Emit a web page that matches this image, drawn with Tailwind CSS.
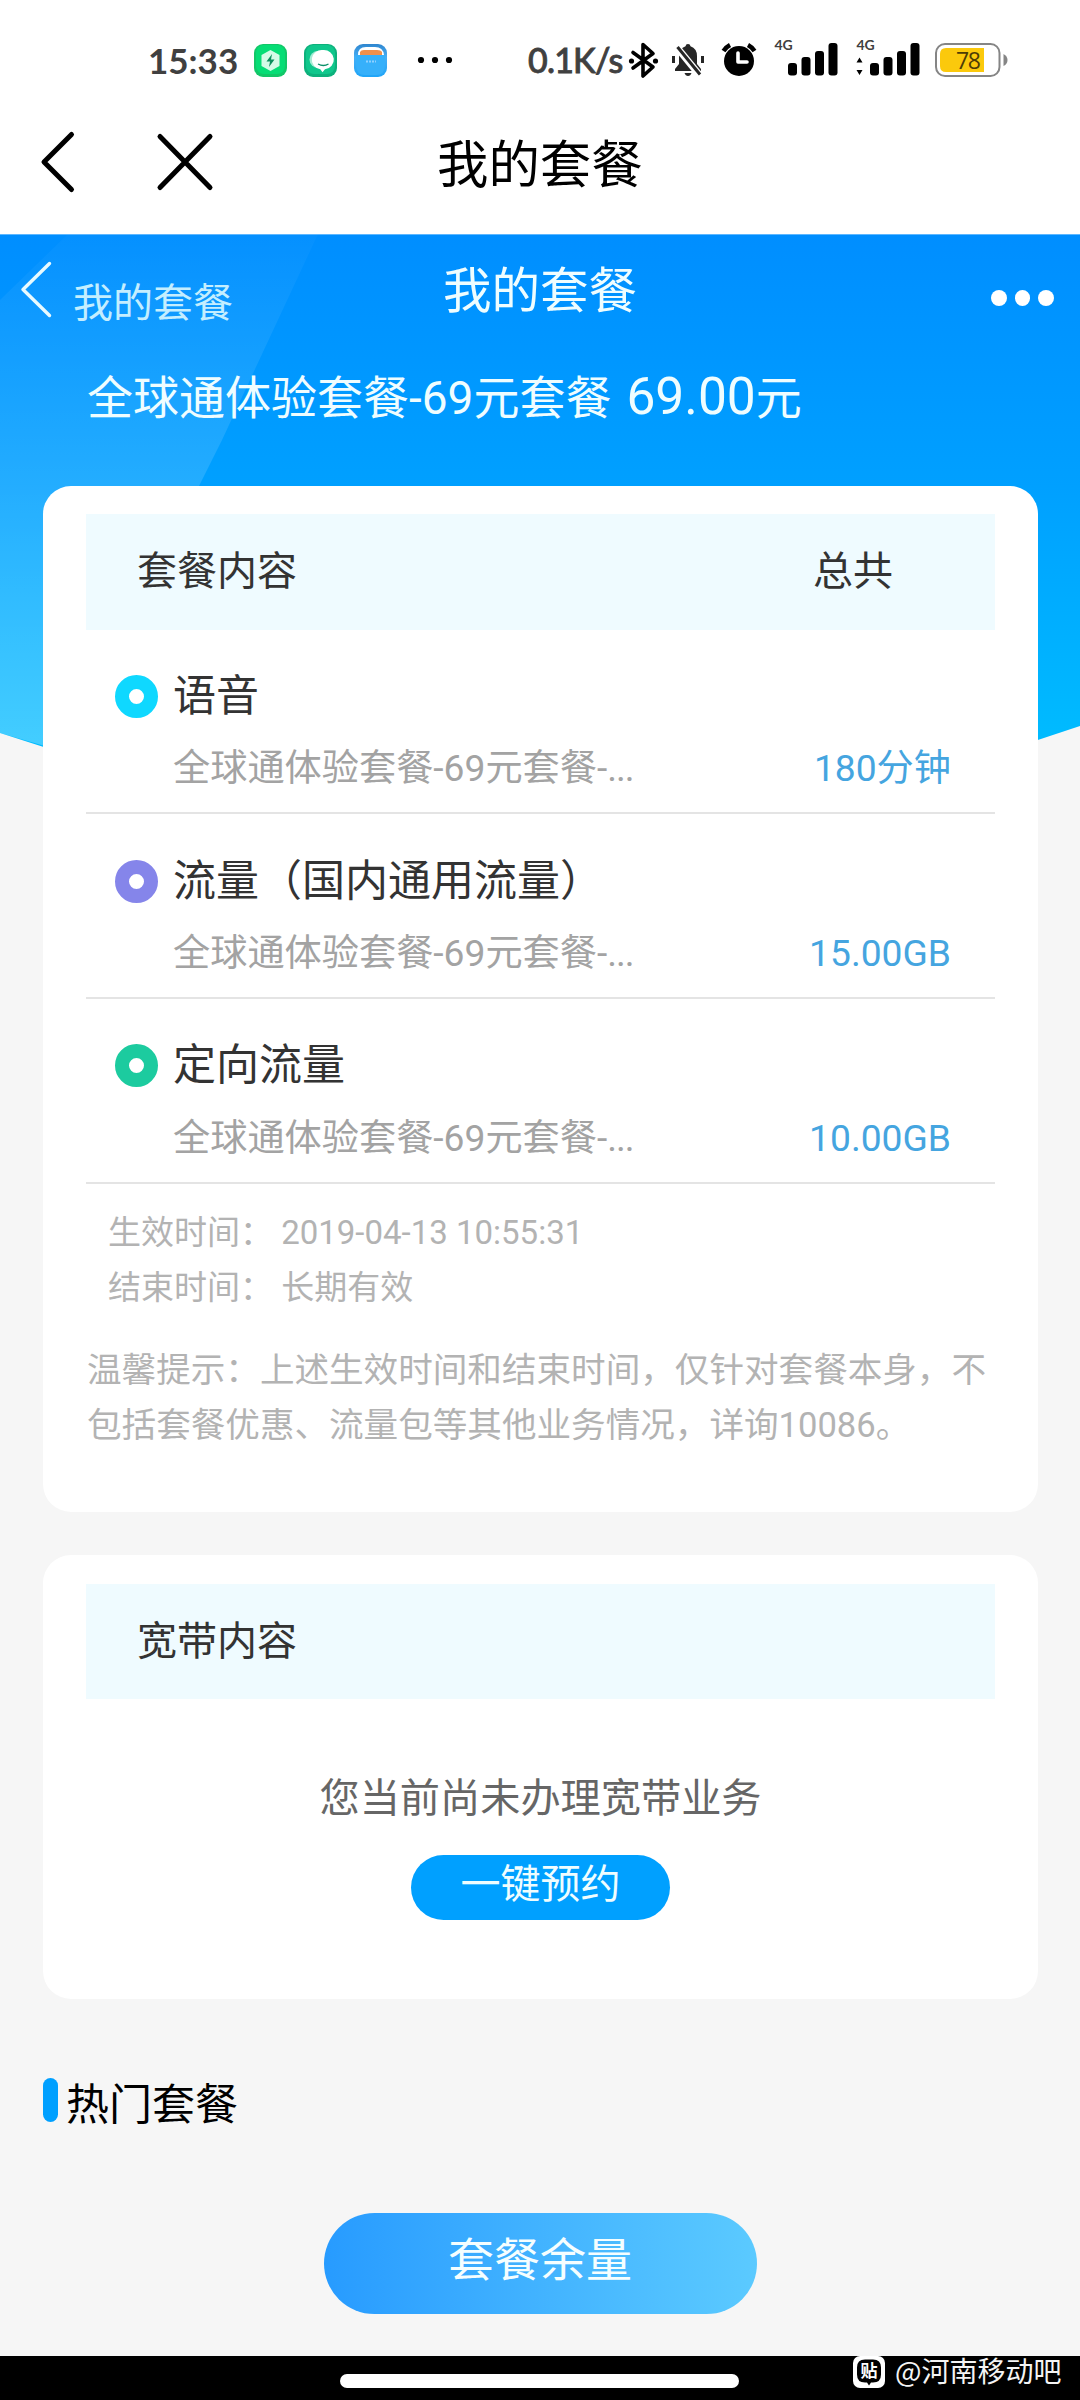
<!DOCTYPE html>
<html lang="zh-CN">
<head>
<meta charset="utf-8">
<title>我的套餐</title>
<script src="https://cdn.jsdelivr.net/npm/@tailwindcss/browser@4"></script>
</head>
<body class="w-[1080px] h-[2400px] overflow-hidden bg-[#f6f6f6] font-[Roboto,'Noto_Sans_CJK_SC',sans-serif] text-[#333]">
<div class="w-[1080px] h-[2400px] flex flex-col">

  <!-- status bar -->
  <div class="h-[117px] shrink-0 bg-white flex items-start pt-[40px]">
    <div class="w-[105px] pl-[148px] box-content h-10 leading-10 text-[35px] font-bold text-[#404040] font-[Lato,sans-serif] whitespace-nowrap">15:33</div>
    <svg class="w-[206px] h-10 shrink-0" viewBox="253 40 206 40">
      <defs>
        <linearGradient id="wal" x1="0" y1="0" x2="0" y2="1"><stop offset="0" stop-color="#2f86cf"/><stop offset=".4" stop-color="#46aef5"/><stop offset="1" stop-color="#1fa5f8"/></linearGradient>
      </defs>
      <rect x="254" y="44" width="33" height="33" rx="9" fill="#12c768"/>
      <rect x="256" y="45" width="29" height="29" rx="8" fill="#06dd75"/>
      <path d="M270.500 50l9 5v11l-9 5-9-5V55z" fill="#d5fbe7"/>
      <path d="M272 54l-5.500 7.500h3.500l-1 5.500 5.500-7.500h-3.500z" fill="#0b8f5c"/>
      <rect x="304" y="44" width="33" height="33" rx="9" fill="#0db17c"/>
      <rect x="306" y="45" width="29" height="29" rx="8" fill="#10c78c"/>
      <circle cx="318" cy="59.500" r="8.500" fill="#a5ecd4"/>
      <path d="M323 50a10 9.700 0 0 1 2 19.300l-2.500 3-2.200-3A9.800 9.700 0 0 1 323 50z" fill="#fff"/>
      <path d="M318 64q5.500 3 10.500 0" fill="none" stroke="#0b8f68" stroke-width="1.300"/>
      <rect x="354" y="44" width="33" height="33" rx="9" fill="url(#wal)"/>
      <path d="M358 55q0-8 8-8h9q8 0 9 8z" fill="#fff"/>
      <path d="M360 52q1-2 4-2h13q4 0 5 2v3h-22z" fill="#f0904c"/>
      <path d="M356 55h29v10q0 10-9 10h-11q-9 0-9-10z" fill="#36b0fa"/>
      <path d="M366 61.500h10" stroke="#8fd0ff" stroke-width="2" stroke-dasharray="2 1"/>
      <g fill="#000"><circle cx="421" cy="60" r="3.100"/><circle cx="435" cy="60" r="3.100"/><circle cx="449" cy="60" r="3.100"/></g>
    </svg>
    <div class="w-[98px] pl-[69px] box-content h-10 leading-10 text-[34px] font-[Lato,sans-serif] font-medium text-[#404040] whitespace-nowrap tracking-[-0.8px] [-webkit-text-stroke:0.8px_#404040]">0.1K/s</div>
    <svg class="w-[390px] h-10 shrink-0 overflow-visible" viewBox="626 40 390 40">
      <path d="M633 52.500l20 14.500-10 9V44.500l10 9-20 14.500" fill="none" stroke="#000" stroke-width="3.600" stroke-linejoin="round" stroke-linecap="round"/>
      <circle cx="631.500" cy="61" r="2.600"/><circle cx="655.500" cy="61" r="2.600"/>
      <g fill="#262626">
        <path d="M688 44a2.500 2.500 0 0 1 2.500 2.200Q697 48.500 697 56v8l4 5v2h-26v-2l4-5v-8q0-7.500 6.500-9.800A2.500 2.500 0 0 1 688 44z"/>
        <path d="M684.500 73h7q-1 3-3.500 3t-3.500-3z"/>
        <rect x="672" y="56" width="3" height="7"/><rect x="701" y="56" width="3" height="7"/>
      </g>
      <path d="M677 47.500L699.500 75" stroke="#fff" stroke-width="7"/>
      <path d="M677.500 47L700 74.500" stroke="#262626" stroke-width="3"/>
      <circle cx="739" cy="61" r="15"/>
      <path d="M723.500 51a17 17 0 0 1 6.500-6" fill="none" stroke="#000" stroke-width="4.500"/>
      <path d="M754.500 51a17 17 0 0 0-6.500-6" fill="none" stroke="#000" stroke-width="4.500"/>
      <path d="M738 53v9h9" fill="none" stroke="#fff" stroke-width="3.600" stroke-linecap="round" stroke-linejoin="round"/>
      <g font-family="Lato,sans-serif" font-size="14" font-weight="700" fill="#404040"><text x="774.500" y="50">4G</text><text x="856.500" y="50">4G</text></g>
      <rect x="788" y="63" width="9" height="12.500" rx="3"/><rect x="801.500" y="57" width="9" height="18.500" rx="3"/><rect x="815" y="51" width="9" height="24.500" rx="3"/><rect x="828.500" y="43" width="9" height="32.500" rx="3"/>
      <rect x="870" y="63" width="9" height="12.500" rx="3"/><rect x="883.500" y="57" width="9" height="18.500" rx="3"/><rect x="897" y="51" width="9" height="24.500" rx="3"/><rect x="910.500" y="43" width="9" height="32.500" rx="3"/>
      <path d="M859.500 57.500l3 5h-6zM859.500 75l3-5h-6z"/>
      <rect x="936" y="44" width="63.500" height="32" rx="9" fill="#fff" stroke="#858585" stroke-width="2"/>
      <path d="M946 48h38v24h-38q-6 0-6-6V54q0-6 6-6z" fill="#fbc90c"/>
      <path d="M1003.500 54q4 2 4 6t-4 6z" fill="#858585"/>
      <text x="956" y="69" font-family="'Open Sans',sans-serif" font-size="23" font-weight="500" fill="#4d3c06" textLength="25">78</text>
    </svg>
  </div>

  <!-- app bar -->
  <div class="h-[117px] shrink-0 bg-white flex items-start">
    <svg class="w-[438px] h-[100px] shrink-0" viewBox="0 117 438 100" fill="none" stroke="#000" stroke-width="5" stroke-linecap="round" stroke-linejoin="round">
      <path d="M71.500 134.500L44 162l27.500 27.500"/>
      <path d="M160 136.500l50 51M210 136.500l-50 51"/>
    </svg>
    <h1 class="h-[60px] -ml-px mt-[19px] leading-[60px] text-[51.400px] text-black">我的套餐</h1>
  </div>

  <!-- page body -->
  <div class="relative h-[2122px] shrink-0 flex flex-col">
    <svg class="absolute left-0 top-0 w-[1080px] h-[560px]" viewBox="0 234 1080 560">
      <defs>
        <linearGradient id="sky" gradientUnits="userSpaceOnUse" x1="0" y1="234" x2="0" y2="740"><stop offset="0" stop-color="#008eff"/><stop offset=".5" stop-color="#00a0ff"/><stop offset="1" stop-color="#00bbff"/></linearGradient>
        <linearGradient id="facet" gradientUnits="userSpaceOnUse" x1="0" y1="234" x2="0" y2="740"><stop offset="0" stop-color="#fff" stop-opacity=".02"/><stop offset=".25" stop-color="#fff" stop-opacity=".08"/><stop offset="1" stop-color="#fff" stop-opacity=".26"/></linearGradient>
      </defs>
      <path d="M0 234H1080V726L540 906 0 733z" fill="url(#sky)"/>
      <path d="M68 234H318L222 440 197 490V790L0 733V300z" fill="url(#facet)"/>
      <path d="M0 234H1080" stroke="#7cc4ff" stroke-width="1.500"/>
    </svg>

    <div class="relative h-[88px] flex">
      <svg class="w-[73px] h-[88px] shrink-0" viewBox="0 234 73 88" fill="none" stroke="#e8faff" stroke-width="3.400" stroke-linecap="round" stroke-linejoin="round"><path d="M49.500 263.500L23 289.500l26.500 26"/></svg>
      <div class="w-[370px] h-[50px] mt-[45px] leading-[50px] text-[40px] text-[#c4eeff]">我的套餐</div>
      <div class="w-[548px] h-[60px] mt-[28px] leading-[60px] text-[48.500px] text-[#effdff]">我的套餐</div>
      <div class="flex gap-2 mt-[56px]"><i class="size-[15.500px] rounded-full bg-white"></i><i class="size-[15.500px] rounded-full bg-white"></i><i class="size-[15.500px] rounded-full bg-white"></i></div>
    </div>

    <div class="relative h-[164px] pl-[87px] pt-[45px] leading-[60px] text-[46px] text-[#effdff] whitespace-nowrap">全球通体验套餐-69元套餐<span class="ml-[15px] text-[51.500px]">69.00</span><span>元</span></div>

    <!-- plan card -->
    <section class="relative ml-[43px] mr-[42px] h-[1026px] rounded-[28px] bg-white px-[43px] pt-7">
      <div class="h-[116px] bg-[#effbff] flex justify-between pl-[51px] pr-[102px] text-[40px] leading-[115px]"><span>套餐内容</span><span>总共</span></div>

      <div class="h-[184px] border-b-2 border-[#e4e4e4] pl-[29px] pr-[44px]">
        <div class="flex items-center gap-[15px] pt-[36px]"><i class="size-[43px] rounded-full border-[14px] border-[#0fd8ff]"></i><span class="h-[60px] leading-[60px] text-[43px]">语音</span></div>
        <div class="flex justify-between pl-[58px] mt-[17px] h-[50px] leading-[50px] text-[37.200px] text-[#a3a3a3]"><span class="whitespace-nowrap">全球通体验套餐-69元套餐-<span class="tracking-[-1px]">...</span></span><span class="text-[#45a5e0]">180分钟</span></div>
      </div>
      <div class="h-[185px] border-b-2 border-[#e4e4e4] pl-[29px] pr-[44px]">
        <div class="flex items-center gap-[15px] pt-[37px]"><i class="size-[43px] rounded-full border-[14px] border-[#8585ea]"></i><span class="h-[60px] leading-[60px] text-[43px]">流量（国内通用流量）</span></div>
        <div class="flex justify-between pl-[58px] mt-[17px] h-[50px] leading-[50px] text-[37.200px] text-[#a3a3a3]"><span class="whitespace-nowrap">全球通体验套餐-69元套餐-<span class="tracking-[-1px]">...</span></span><span class="text-[#45a5e0]">15.00GB</span></div>
      </div>
      <div class="h-[185px] border-b-2 border-[#e4e4e4] pl-[29px] pr-[44px]">
        <div class="flex items-center gap-[15px] pt-[36px]"><i class="size-[43px] rounded-full border-[14px] border-[#1ccb9f]"></i><span class="h-[60px] leading-[60px] text-[43px]">定向流量</span></div>
        <div class="flex justify-between pl-[58px] mt-[18px] h-[50px] leading-[50px] text-[37.200px] text-[#a3a3a3]"><span class="whitespace-nowrap">全球通体验套餐-69元套餐-<span class="tracking-[-1px]">...</span></span><span class="text-[#45a5e0]">10.00GB</span></div>
      </div>

      <div class="pt-[21px] pl-[22px] text-[33px] leading-[55px] text-[#b3b3b3]">
        <p>生效时间： 2019-04-13 10:55:31</p>
        <p>结束时间： 长期有效</p>
      </div>
      <div class="pt-[28px] pl-px text-[34.600px] leading-[55px] text-[#b3b3b3] whitespace-nowrap">
        <p>温馨提示：上述生效时间和结束时间，仅针对套餐本身，不</p>
        <p>包括套餐优惠、流量包等其他业务情况，详询10086。</p>
      </div>
    </section>

    <!-- broadband card -->
    <section class="relative ml-[43px] mr-[42px] mt-[43px] h-[444px] rounded-[28px] bg-white px-[43px] pt-[29px] flex flex-col">
      <div class="h-[115px] bg-[#effbff] pl-[51px] text-[40px] leading-[115px]">宽带内容</div>
      <p class="mt-[75px] text-center text-[40.200px] leading-[50px] text-[#666]">您当前尚未办理宽带业务</p>
      <button class="self-center mt-[31px] w-[259px] h-[65px] rounded-full bg-[#00a0ff] pb-[5px] text-[40px] leading-[60px] text-[#effdff]">一键预约</button>
    </section>

    <div class="flex mt-[79px] pl-[43px] h-[60px]">
      <i class="w-[15px] h-[44px] rounded-full bg-[#00a0ff]"></i>
      <h2 class="ml-[8px] -mt-[3px] h-[60px] leading-[60px] text-[43px] text-black">热门套餐</h2>
    </div>

    <button class="self-center mt-[75px] w-[433px] h-[101px] rounded-full bg-linear-to-r from-[#279bff] to-[#5bcaff] pb-[6px] text-[46px] leading-[95px] text-[#f5feff]">套餐余量</button>
  </div>

  <!-- navigation bar -->
  <div class="h-[44px] shrink-0 bg-black flex items-start">
    <i class="ml-[340px] mt-[18px] w-[399px] h-[14px] rounded-full bg-white"></i>
    <svg class="ml-[114px] w-[32px] h-[32px]" viewBox="0 0 32 32">
      <rect width="32" height="32" rx="7" fill="#fff"/>
      <path d="M12 3.500h8q8 0 8 8v7q0 8-8 8h-2L16 29.500l-2-3h-2q-8 0-8-8v-7q0-8 8-8z" fill="#000"/>
      <text x="16" y="21" text-anchor="middle" font-family="'Noto Sans CJK SC',sans-serif" font-size="17" font-weight="700" fill="#fff">贴</text>
    </svg>
    <span class="ml-[10px] h-7 leading-7 text-[28px] text-[#f4f4f4] font-['Noto_Sans_CJK_SC',sans-serif] whitespace-nowrap">@河南移动吧</span>
  </div>
</div>
</body>
</html>
